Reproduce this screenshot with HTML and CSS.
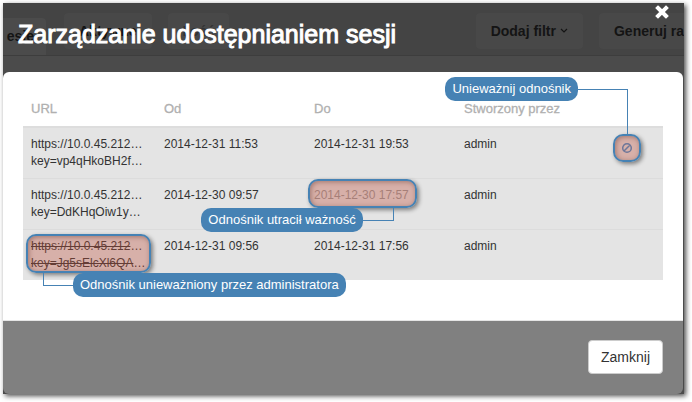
FILE: index.html
```html
<!DOCTYPE html>
<html lang="pl">
<head>
    <meta charset="UTF-8">
    <meta name="viewport" content="width=device-width, initial-scale=1.0">
    <title>Zarządzanie udostępnianiem sesji</title>
    <link rel="stylesheet" href="styles.css">
</head>
<body>
    <div class="window">
        <div class="toolbar">
            <span class="tab">esje</span>
            <span class="pill">Aktywne</span>
            <span class="pill pill-faded">Ilość</span>
            <span class="pill pill-right">Dodaj filtr
                <svg class="chevron" viewBox="0 0 8 6" width="8" height="6"><path d="M1 1l3 3 3-3" fill="none" stroke="currentColor" stroke-width="1.2"/></svg>
            </span>
            <span class="pill pill-last">Generuj ra</span>
        </div>

        <div class="modal" role="dialog" aria-labelledby="title">
            <div class="modal-header">
                <h1 id="title">Zarządzanie udostępnianiem sesji</h1>
                <button class="close" type="button" aria-label="Zamknij okno">
                    <svg viewBox="0 0 14 14" width="14" height="14"><path d="M3 3l8 8M11 3l-8 8" stroke="currentColor" stroke-width="4" stroke-linecap="square"/></svg>
                </button>
            </div>

            <div class="modal-body">
                <table class="links">
                    <thead>
                        <tr>
                            <th class="col-url">URL</th>
                            <th class="col-date">Od</th>
                            <th class="col-date">Do</th>
                            <th>Stworzony przez</th>
                            <th class="col-action"></th>
                        </tr>
                    </thead>
                    <tbody>
                        <tr>
                            <td>https://10.0.45.212…<br>key=vp4qHkoBH2f…</td>
                            <td>2014-12-31 11:53</td>
                            <td>2014-12-31 19:53</td>
                            <td>admin</td>
                            <td>
                                <div class="mark mark-action">
                                    <button class="revoke" type="button" aria-label="Unieważnij odnośnik">
                                        <svg viewBox="0 0 12 12" width="12" height="12"><path d="M6 1.7a4.3 4.3 0 1 0 0 8.6a4.3 4.3 0 1 0 0-8.6M3 9l6-6" fill="none" stroke="currentColor" stroke-width="1.5"/></svg>
                                    </button>
                                    <span class="line line-action"></span>
                                    <span class="callout callout-action">Unieważnij odnośnik</span>
                                </div>
                            </td>
                        </tr>
                        <tr>
                            <td>https://10.0.45.212…<br>key=DdKHqOiw1y…</td>
                            <td>2014-12-30 09:57</td>
                            <td>
                                <div class="mark mark-date">
                                    <span class="expired">2014-12-30 17:57</span>
                                    <span class="line line-date"></span>
                                    <span class="callout callout-date">Odnośnik utracił ważność</span>
                                </div>
                            </td>
                            <td>admin</td>
                            <td></td>
                        </tr>
                        <tr>
                            <td>
                                <div class="mark mark-url">
                                    <span class="revoked"><s>https://10.0.45.212</s>…<br><s>key=Jg5sElcXl6QA</s>…</span>
                                    <span class="line line-url"></span>
                                    <span class="callout callout-url">Odnośnik unieważniony przez administratora</span>
                                </div>
                            </td>
                            <td>2014-12-31 09:56</td>
                            <td>2014-12-31 17:56</td>
                            <td>admin</td>
                            <td></td>
                        </tr>
                    </tbody>
                </table>
            </div>

            <div class="modal-footer">
                <button class="btn" type="button">Zamknij</button>
            </div>
        </div>
    </div>
</body>
</html>
```

FILE: styles.css
```css
* {
    box-sizing: border-box;
}
body {
    margin: 0;
    padding: 3px 8px 8px 3px;
    background-color: white;
    color: #333;
    font-family: "Liberation Sans", Arial, sans-serif;
    font-size: 12px;
    line-height: 17px;
}
button {
    font-family: inherit;
    cursor: pointer;
}
svg {
    display: block;
}
.window {
    display: grid;
    background-color: #4b4b4b;
    box-shadow: 2px 2px 5px rgba(0, 0, 0, 0.7);
}
.toolbar,
.modal {
    grid-area: 1 / 1;
    min-width: 0;
}

/* dimmed page behind the dialog */
.toolbar {
    align-self: start;
    display: flex;
    align-items: center;
    height: 53px;
    overflow: hidden;
    background-color: #444;
    border-bottom: 1px solid #3d3d3d;
    color: #141414;
    font-size: 14px;
    font-weight: bold;
    white-space: nowrap;
}
.tab {
    align-self: flex-end;
    width: 43px;
    height: 37px;
    margin-right: 2px;
    padding: 10px 12px 0 0;
    overflow: hidden;
    background-color: #4b4b4b;
    border-radius: 0 4px 0 0;
    direction: rtl;
}
.pill {
    display: flex;
    align-items: center;
    gap: 4px;
    height: 36px;
    margin: 4px 0 0 16px;
    padding: 0 15px;
    background-color: #484848;
    border-radius: 4px;
}
.pill-faded {
    color: #333;
}
.pill-right {
    margin-left: auto;
}
.pill-last {
    border-radius: 4px 0 0 4px;
    padding-right: 0;
}

.modal {
    position: relative;
    margin-right: 1px;
}
.modal-header {
    display: flex;
    justify-content: space-between;
    align-items: flex-start;
    height: 69px;
    padding: 0 14px 0 15px;
}
.modal-header h1 {
    margin: 15px 0 0;
    color: white;
    font-size: 25px;
    font-weight: normal;
    line-height: 32px;
    -webkit-text-stroke: 1px;
}
.close {
    margin-top: 2px;
    padding: 0;
    border: none;
    background: none;
    color: white;
}
.modal-body {
    padding: 20px 20px 40px;
    background-color: white;
    border-bottom: 1px solid #e5e5e5;
    border-radius: 6px 6px 0 0;
}
.modal-footer {
    display: flex;
    justify-content: flex-end;
    padding: 19px 20px 20px;
    background-color: #808080;
    border-radius: 0 0 6px 6px;
}
.btn {
    height: 34px;
    padding: 0 12px;
    border: 1px solid #ccc;
    border-radius: 4px;
    background-color: white;
    color: #333;
    font-size: 14px;
}

.links {
    width: 100%;
    table-layout: fixed;
    border-collapse: separate;
    border-spacing: 0;
}
.links th {
    height: 36px;
    padding: 8px;
    border-bottom: 2px solid #ddd;
    color: #b0b0b0;
    font-size: 13px;
    font-weight: normal;
    line-height: 18px;
    text-align: left;
    -webkit-text-stroke: 0.3px;
}
.links td {
    padding: 8px;
    border-bottom: 1px solid #dcdcdc;
    background-color: #e4e4e4;
    vertical-align: top;
    white-space: nowrap;
}
.links tr:last-child td {
    border-bottom: none;
}
.col-url {
    width: 133px;
}
.col-date {
    width: 150px;
}
.col-action {
    width: 50px;
}
.revoke {
    display: block;
    padding: 6px 0;
    border: none;
    background: none;
    color: #428bca;
}
.expired {
    color: #999;
}

/* highlighted spots with their callouts */
.mark {
    position: relative;
    width: max-content;
}
.mark::before {
    content: "";
    position: absolute;
    inset: -8px -8px -4px -6px;
    border: 2px solid #4682b4;
    border-radius: 10px;
    background-color: rgba(192, 80, 60, 0.35);
    box-shadow: 2px 2px 4px rgba(0, 0, 0, 0.45), inset 1px 1px 5px rgba(80, 30, 20, 0.4);
}
.mark-url::before {
    inset: -4px -6px -1px -5px;
}
.mark-action::before {
    inset: -2px -8px;
}
.line,
.callout {
    position: absolute;
    z-index: 1;
}
.line {
    border: 0 solid #4682b4;
}
.line-action {
    right: 5px;
    bottom: 26px;
    width: 50px;
    height: 45px;
    border-width: 1px 1px 0 0;
}
.line-date {
    left: 49px;
    top: 21px;
    width: 31px;
    height: 13px;
    border-width: 0 1px 1px 0;
}
.line-url {
    left: 12px;
    top: 35px;
    width: 31px;
    height: 13px;
    border-width: 0 0 1px 1px;
}
.callout {
    height: 24px;
    padding: 0 7px;
    border-radius: 10px;
    background-color: #4682b4;
    color: white;
    font-size: 13px;
    line-height: 24px;
}
.callout-action {
    right: 55px;
    bottom: 59px;
}
.callout-date {
    right: 46px;
    top: 21px;
}
.callout-url {
    left: 42px;
    top: 35px;
}
```
